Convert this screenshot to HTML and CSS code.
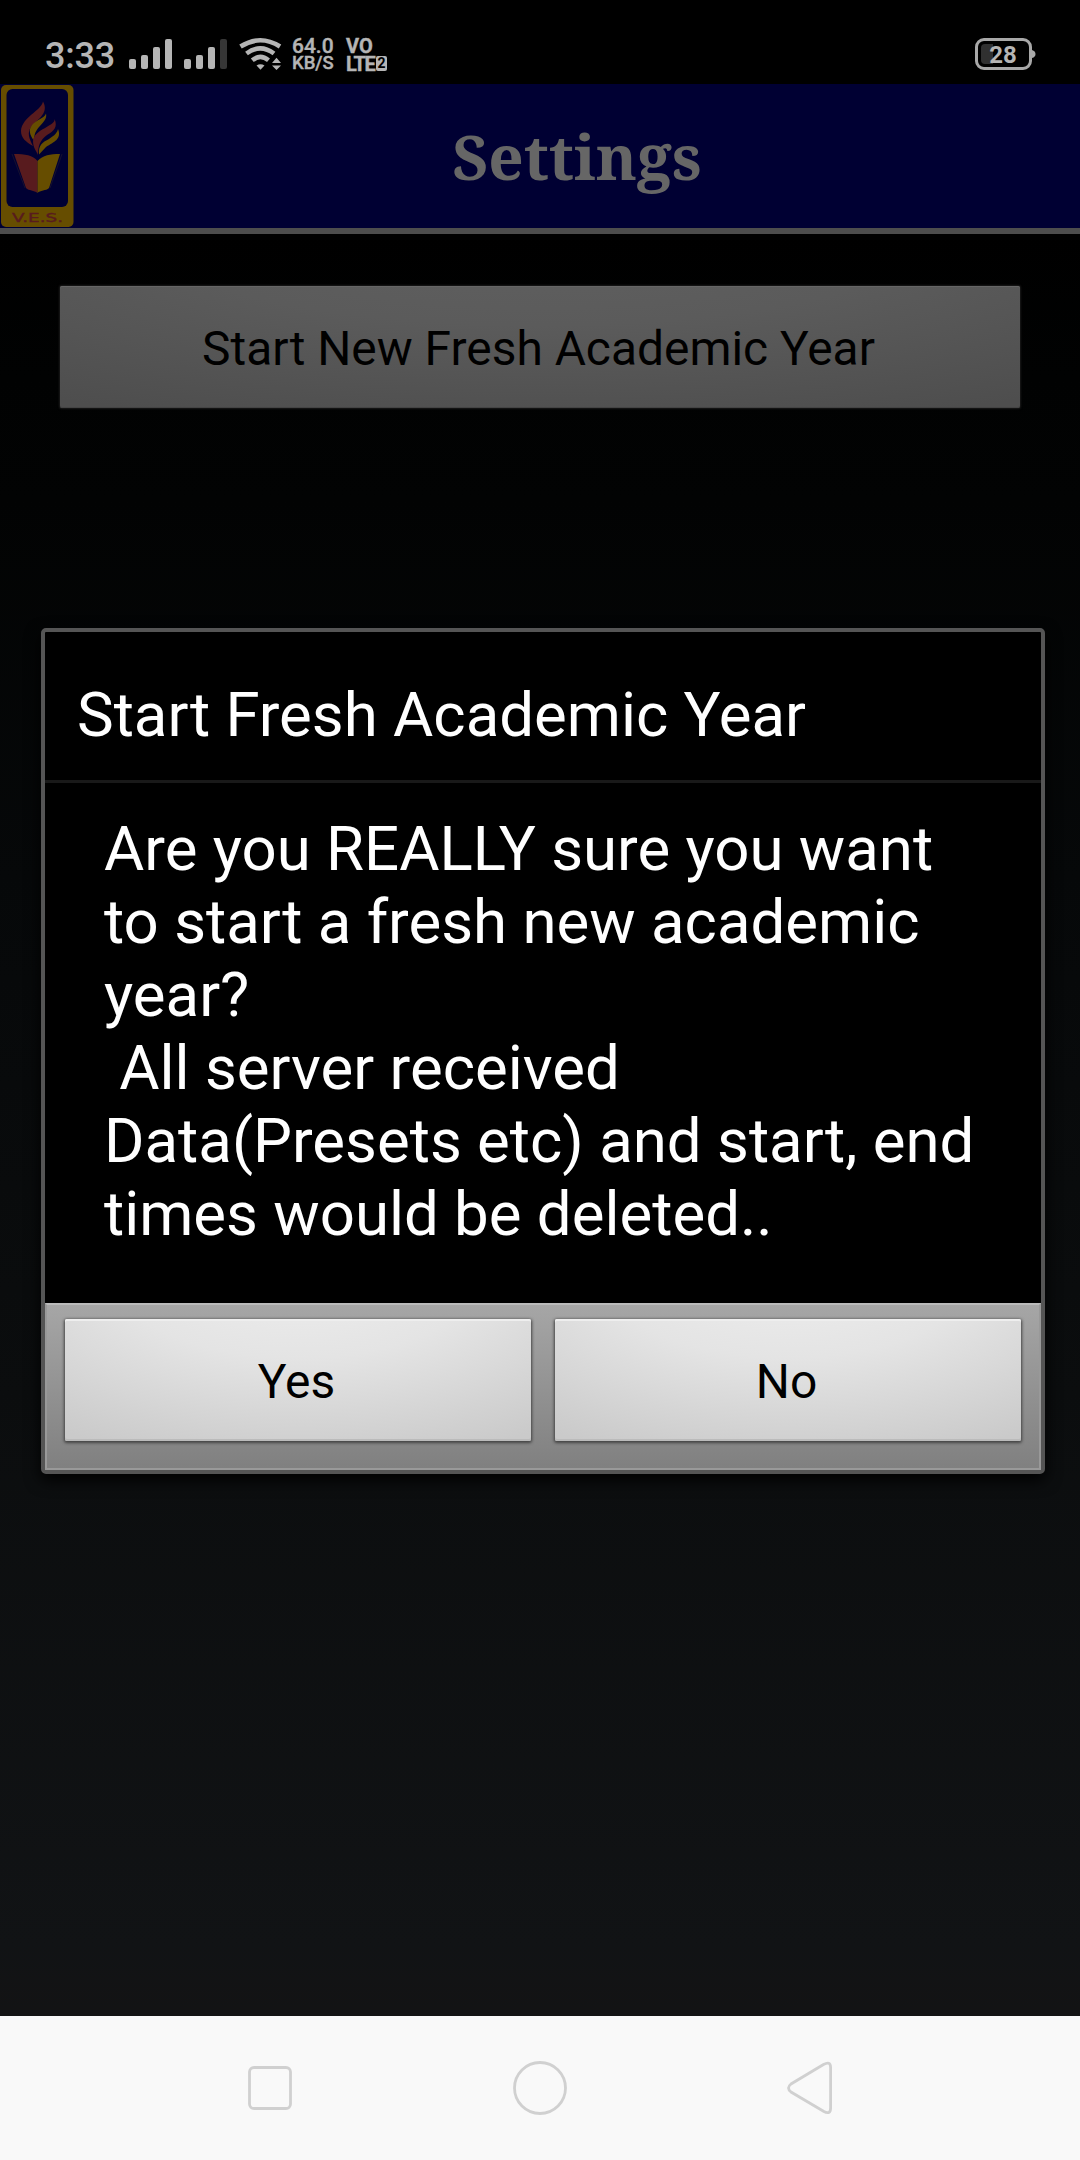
FILE: index.html
```html
<!DOCTYPE html>
<html lang="en">
<head>
<meta charset="utf-8">
<title>Settings</title>
<link rel="stylesheet" href="styles.css">
</head>
<body>
<div class="screen">
  <div class="status">
    <span class="clock">3:33</span>
    <svg class="signals" width="98" height="30" viewBox="0 0 98 30">
      <g fill="#b5b5b5"><rect x="0" y="20" width="7" height="10" rx="2"/><rect x="12" y="16" width="7" height="14" rx="2"/><rect x="24" y="8" width="7" height="22" rx="2"/><rect x="36" y="0" width="7" height="30" rx="2"/><rect x="55" y="20" width="7" height="10" rx="2"/><rect x="67" y="16" width="7" height="14" rx="2"/><rect x="79" y="8" width="7" height="22" rx="2"/></g>
      <rect x="91" y="0" width="7" height="30" rx="2" fill="#363636"/>
    </svg>
    <svg class="wifi" width="43" height="34" viewBox="0 0 43 34">
      <g fill="none" stroke="#b5b5b5" stroke-width="4.6"><path d="M1.5 9.5Q21.300 -3 41 9.500"/><path d="M7.500 16.500Q21.300 6.300 35 16.500"/><path d="M13.300 23.300Q21.300 16.600 29.500 23.300"/></g>
      <path d="M17.500 28.500Q21.500 25.800 25.500 28.500L21.500 32.800Z" fill="#b5b5b5"/>
      <path d="M33 26L37.500 20.800L42 26ZM33 28.500H42L37.500 33Z" fill="#b5b5b5"/>
    </svg>
    <span class="speed"><b class="rate">64.0</b><b class="unit">KB/S</b></span>
    <span class="volte"><b>VO</b><span class="lte"><b>LTE</b><i>2</i></span></span>
    <svg class="battery" width="62" height="34" viewBox="0 0 62 34">
      <rect x="1.500" y="2.500" width="54" height="29" rx="7.500" fill="none" stroke="#a8a8a8" stroke-width="3"/>
      <path d="M57 13Q60.500 14 60.500 17T57 21Z" fill="#a8a8a8"/>
      <path d="M10 7H18V27H10Q6 27 6 23V11Q6 7 10 7Z" fill="#303030"/>
      <text x="28" y="26" text-anchor="middle" class="level">28</text>
    </svg>
  </div>
  <div class="header">
    <svg class="logo" width="74" height="144" viewBox="0 0 74 144">
      <rect x="1" y="1" width="72.500" height="142" rx="5" fill="#664d00"/>
      <rect x="6.500" y="5" width="61.500" height="118" rx="6" fill="#000033"/>
      <path d="M43 17.500C41 27 22 33 21 47C21 54 26 58 33 62C29 54 27 49 31 43C35 37 50 30 43 17.500Z" fill="#581b1e"/>
      <path d="M46 29.500C48 38 36 42 34.500 52L33.500 56C30 51 28 46 32 41C36 36 45 34 46 29.500Z" fill="#664d00"/>
      <path d="M54.500 35C56 42 34 45 33 57C33 64 37 68 38 71C38 62 40 56 47 51C54 47 58 43 54.500 35Z" fill="#581b1e"/>
      <path d="M58 45C62 55 54 58 46 63L39 70.500C38 61 43 58 49 55C55 51 57 49 58 45Z" fill="#664d00"/>
      <path d="M14 70C25 70 33 71 37.500 77V109C34 106 29 107 26 104Z" fill="#581b1e"/>
      <path d="M60 70C50 70 43 71 37.500 77V109C40 106 46 107 49 104Z" fill="#664d00"/>
      <path d="M12 70L25 104M62 70L50 104" stroke="#16102f" fill="none"/>
      <text x="12" y="138" textLength="51" lengthAdjust="spacingAndGlyphs" class="ves">V.E.S.</text>
    </svg>
    <h1>Settings</h1>
  </div>
  <main>
    <button class="btn dim">Start New Fresh Academic Year</button>
    <section class="dialog">
      <h2>Start Fresh Academic Year</h2>
      <p>Are you REALLY sure you want
to start a fresh new academic
year?
 All server received
Data(Presets etc) and start, end
times would be deleted..</p>
      <div class="actions"><button class="btn">Yes</button><button class="btn">No</button></div>
    </section>
  </main>
  <nav>
    <svg width="1080" height="144" viewBox="0 0 1080 144" fill="none" stroke="#d0d0d0" stroke-width="2.800">
      <rect x="249.500" y="51.500" width="41" height="41" rx="4.500"/>
      <circle cx="540" cy="72" r="25.500"/>
      <path d="M823.500 48.500Q830.600 44.500 830.600 51.500V92Q830.600 99.300 823.500 95.300L791 76Q786 72 791 68Z"/>
    </svg>
  </nav>
</div>
</body>
</html>
```
FILE: styles.css
```css
* { box-sizing: border-box; }
body { margin: 0; background: #000; font-family: Roboto, sans-serif; }
.screen { width: 1080px; height: 2160px; display: flex; flex-direction: column; overflow: hidden; }
.status { height: 84px; background: #000; display: flex; align-items: flex-start; padding: 37px 43px 0 45px; color: #b5b5b5; }
.clock { width: 84px; margin-top: 1px; font-size: 36px; line-height: 36px; font-weight: 500; letter-spacing: -.2px; white-space: nowrap; }
.signals { margin-top: 2px; }
.wifi { margin: 0 0 0 11.500px; }
.speed { width: 54px; margin: 1px 0 0 10.500px; display: flex; flex-direction: column; }
.speed b { font-weight: 500; white-space: nowrap; -webkit-text-stroke: .4px #b5b5b5; }
.rate { font-size: 21px; line-height: 17px; }
.unit { font-size: 18.500px; line-height: 16px; }
.volte { display: flex; flex-direction: column; font-size: 20px; line-height: 18px; -webkit-text-stroke: .4px #b5b5b5; }
.lte { display: flex; }
.lte b { letter-spacing: -1.200px; }
.lte i { width: 11px; height: 15px; margin: 1px 0 0 1.500px; background: #b5b5b5; color: #000; border-radius: 2px; font: 700 14px/15px Roboto, sans-serif; text-align: center; -webkit-text-stroke: 0; }
.battery { margin-left: auto; }
.level { font: 700 24px Roboto, sans-serif; fill: #b5b5b5; }
.header { height: 150px; flex: none; background: #000033; border-bottom: 6px solid #4d4d4d; display: flex; align-items: flex-start; }
.ves { font: 13px "DejaVu Sans", sans-serif; fill: #581b1e; stroke: #581b1e; stroke-width: .4px; }
h1 { flex: 1; margin: 0; text-align: center; color: #666; font: bold 62px/144px "Noto Serif", "Droid Serif", "DejaVu Serif", serif; }
main { height: 1782px; flex: none; padding: 52px 35px 0 41px; background: linear-gradient(#000 0, #010202 8%, #020303 15%, #060809 36%, #0b0d0e 65%, #111315 96%, #131314); }
.btn { border: 0; padding: 4px 3px 0 0; flex: 1 1 0; height: 122px; border-radius: 2px; font: 47.900px/118px Roboto, sans-serif; color: #000; text-align: center; background: radial-gradient(ellipse 90% 160% at 50% -40%, #eee, #e4e4e4 45%, #cacaca); box-shadow: inset 0 2px #eee, inset 0 -2px #bbb, 0 1px 3px 1px #444; }
.dim { display: block; width: 960px; margin: 0 0 0 19px; background: radial-gradient(ellipse 90% 160% at 50% -40%, #606060, #5b5b5b 45%, #4e4e4e); box-shadow: inset 0 1px #666, inset 0 -1px #444, 0 0 2px 1px #1b1b1b; }
.dialog { width: 1004px; height: 846px; margin-top: 220px; border: 4px solid #555; border-radius: 5px; background: #000; color: #fff; box-shadow: 0 6px 16px #000; display: flex; flex-direction: column; }
h2 { margin: 0; height: 151px; flex: none; border-bottom: 3px solid #191919; padding: 10px 0 0 32px; font: 400 61.750px/146px Roboto, sans-serif; }
p { margin: 0; flex: 1; padding: 30px 0 0 59px; font-size: 61.750px; line-height: 73px; white-space: pre; }
.actions { height: 167px; flex: none; display: flex; gap: 24px; padding: 14px 18px 0 18px; background: linear-gradient(#a6a6a6, #808080); border: 2px solid #999; border-top-color: #bbb; }
nav { height: 144px; background: #f9f9f9; }
nav svg { display: block; }
```
